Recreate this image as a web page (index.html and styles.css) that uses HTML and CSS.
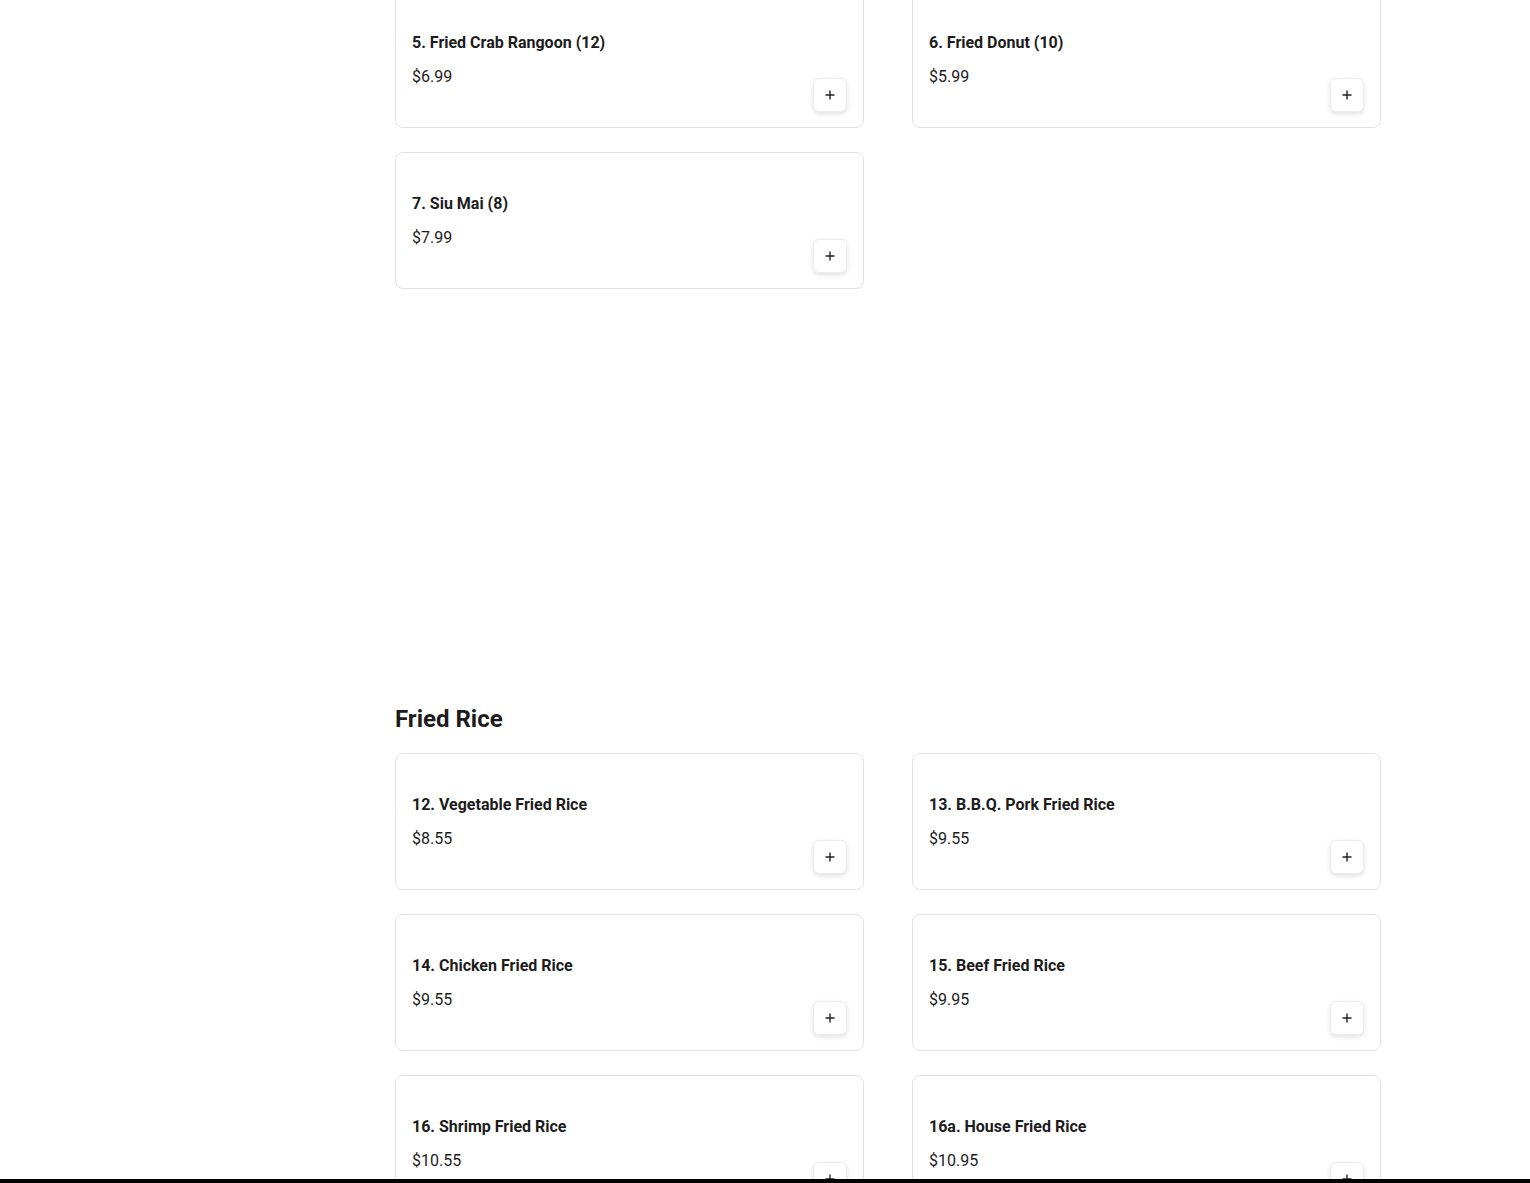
FILE: index.html
```html
<!DOCTYPE html>
<html>
<head>
<meta charset="utf-8">
<link rel="stylesheet" href="styles.css">
</head>
<body>
<main class="menu">
  <section class="section section-first">
    <div class="grid">
      <div class="card"><div class="info"><div class="name">5. Fried Crab Rangoon (12)</div><div class="price">$6.99</div></div><button class="add"><svg viewBox="0 0 12 12" width="12" height="12"><path d="M6 1.5v9M1.5 6h9" stroke="#222" stroke-width="1.4"/></svg></button></div>
      <div class="card"><div class="info"><div class="name">6. Fried Donut (10)</div><div class="price">$5.99</div></div><button class="add"><svg viewBox="0 0 12 12" width="12" height="12"><path d="M6 1.5v9M1.5 6h9" stroke="#222" stroke-width="1.4"/></svg></button></div>
      <div class="card"><div class="info"><div class="name">7. Siu Mai (8)</div><div class="price">$7.99</div></div><button class="add"><svg viewBox="0 0 12 12" width="12" height="12"><path d="M6 1.5v9M1.5 6h9" stroke="#222" stroke-width="1.4"/></svg></button></div>
    </div>
  </section>
  <section class="section">
    <h2 class="heading">Fried Rice</h2>
    <div class="grid">
      <div class="card"><div class="info"><div class="name">12. Vegetable Fried Rice</div><div class="price">$8.55</div></div><button class="add"><svg viewBox="0 0 12 12" width="12" height="12"><path d="M6 1.5v9M1.5 6h9" stroke="#222" stroke-width="1.4"/></svg></button></div>
      <div class="card"><div class="info"><div class="name">13. B.B.Q. Pork Fried Rice</div><div class="price">$9.55</div></div><button class="add"><svg viewBox="0 0 12 12" width="12" height="12"><path d="M6 1.5v9M1.5 6h9" stroke="#222" stroke-width="1.4"/></svg></button></div>
      <div class="card"><div class="info"><div class="name">14. Chicken Fried Rice</div><div class="price">$9.55</div></div><button class="add"><svg viewBox="0 0 12 12" width="12" height="12"><path d="M6 1.5v9M1.5 6h9" stroke="#222" stroke-width="1.4"/></svg></button></div>
      <div class="card"><div class="info"><div class="name">15. Beef Fried Rice</div><div class="price">$9.95</div></div><button class="add"><svg viewBox="0 0 12 12" width="12" height="12"><path d="M6 1.5v9M1.5 6h9" stroke="#222" stroke-width="1.4"/></svg></button></div>
      <div class="card"><div class="info"><div class="name">16. Shrimp Fried Rice</div><div class="price">$10.55</div></div><button class="add"><svg viewBox="0 0 12 12" width="12" height="12"><path d="M6 1.5v9M1.5 6h9" stroke="#222" stroke-width="1.4"/></svg></button></div>
      <div class="card"><div class="info"><div class="name">16a. House Fried Rice</div><div class="price">$10.95</div></div><button class="add"><svg viewBox="0 0 12 12" width="12" height="12"><path d="M6 1.5v9M1.5 6h9" stroke="#222" stroke-width="1.4"/></svg></button></div>
    </div>
  </section>
</main>
<div class="bottom-bar"></div>
</body>
</html>
```
FILE: styles.css
```css
html, body {
  margin: 0;
  padding: 0;
  background: #fff;
  overflow: hidden;
  height: 1183px;
}
body {
  font-family: Roboto, "Liberation Sans", sans-serif;
  color: #1c1c1c;
}
.menu {
  width: 986px;
  margin: 0 0 0 395px;
}
.section-first {
  margin-top: -9px;
  padding-bottom: 412px;
}
.heading {
  font-size: 24px;
  font-weight: 700;
  line-height: 36px;
  margin: 0 0 16px 0;
  color: #1c1c1c;
}
.grid {
  display: grid;
  grid-template-columns: 469px 469px;
  column-gap: 48px;
  row-gap: 24px;
}
.card {
  box-sizing: border-box;
  height: 137px;
  border: 1px solid #e3e3e3;
  border-radius: 8px;
  padding: 16px 16px 15px 16px;
  display: flex;
  justify-content: space-between;
  background: #fff;
}
.info {
  padding-top: 23px;
  display: flex;
  flex-direction: column;
  gap: 10px;
}
.name {
  font-size: 16px;
  font-weight: 700;
  line-height: 24px;
}
.price {
  font-size: 16px;
  font-weight: 400;
  line-height: 24px;
}
.add {
  align-self: flex-end;
  width: 34px;
  height: 34px;
  padding: 0;
  border: 1px solid #ececec;
  border-radius: 6px;
  background: #fff;
  box-shadow: 0 2px 5px rgba(0,0,0,0.12);
  display: flex;
  align-items: center;
  justify-content: center;
  cursor: pointer;
}
.bottom-bar {
  position: fixed;
  left: 0;
  right: 0;
  bottom: 0;
  height: 4px;
  background: #000;
}
```
